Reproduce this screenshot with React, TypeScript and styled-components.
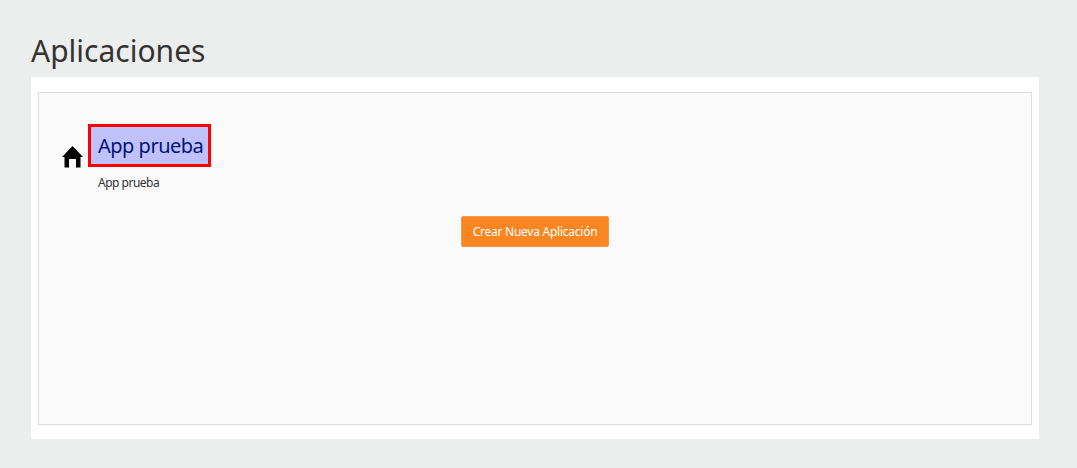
import styled, { createGlobalStyle } from "styled-components";

const GlobalStyle = createGlobalStyle`
  html,
  body {
    margin: 0;
    padding: 0;
    background-color: #eceeed;
    font-family: "Noto Sans", "Liberation Sans", sans-serif;
  }
`;

const Page = styled.div`
  box-sizing: border-box;
  height: 468px;
  padding: 29px 38px 29px 31px;
  overflow: hidden;
`;

const Title = styled.h1`
  margin: 0;
  height: 48px;
  font-size: 30px;
  line-height: 44px;
  font-weight: 400;
  color: #333;
`;

const Panel = styled.main`
  box-sizing: border-box;
  height: 362px;
  padding: 15px 7px 14px;
  background-color: #fff;
`;

const Well = styled.section`
  box-sizing: border-box;
  height: 100%;
  padding: 31px 22px 0;
  background-color: #fafafa;
  border: 1px solid #ddd;
`;

const AppRow = styled.div`
  display: flex;
  align-items: flex-start;
`;

const HomeIcon = styled.svg`
  width: 24px;
  height: 24px;
  margin: 21px 3px 0 0;
  fill: #000;
  flex-shrink: 0;
`;

const AppInfo = styled.div`
  display: flex;
  flex-direction: column;
  align-items: flex-start;
`;

const AppName = styled.h2`
  box-sizing: border-box;
  height: 43px;
  margin: 0;
  padding: 0 5px 0 7px;
  font-size: 20px;
  line-height: 38px;
  font-weight: 400;
  letter-spacing: -0.5px;
  color: #00147a;
  background-color: #c0c0fb;
  border: 3px solid #f00;
`;

const AppDescription = styled.p`
  margin: 8px 0 0 10px;
  font-size: 12px;
  line-height: 16px;
  letter-spacing: -0.5px;
  color: #333;
`;

const Actions = styled.div`
  display: flex;
  justify-content: center;
  margin-top: 25px;
`;

const CreateButton = styled.button`
  box-sizing: border-box;
  width: 148px;
  height: 31px;
  padding: 0;
  font-family: inherit;
  font-size: 12px;
  letter-spacing: -0.25px;
  color: #fff;
  background-color: #f98620;
  border: 1px solid #f09a4c;
  border-radius: 2px;
`;

export default function App() {
  return (
    <>
      <GlobalStyle />
      <Page>
        <Title>Aplicaciones</Title>
        <Panel>
          <Well>
            <AppRow>
              <HomeIcon viewBox="0 0 24 24">
                <path d="M11.5 1 1 12h2.5v10.500H8V14h7v8.500h4.500V12H22z" />
              </HomeIcon>
              <AppInfo>
                <AppName>App prueba</AppName>
                <AppDescription>App prueba</AppDescription>
              </AppInfo>
            </AppRow>
            <Actions>
              <CreateButton>Crear Nueva Aplicación</CreateButton>
            </Actions>
          </Well>
        </Panel>
      </Page>
    </>
  );
}
